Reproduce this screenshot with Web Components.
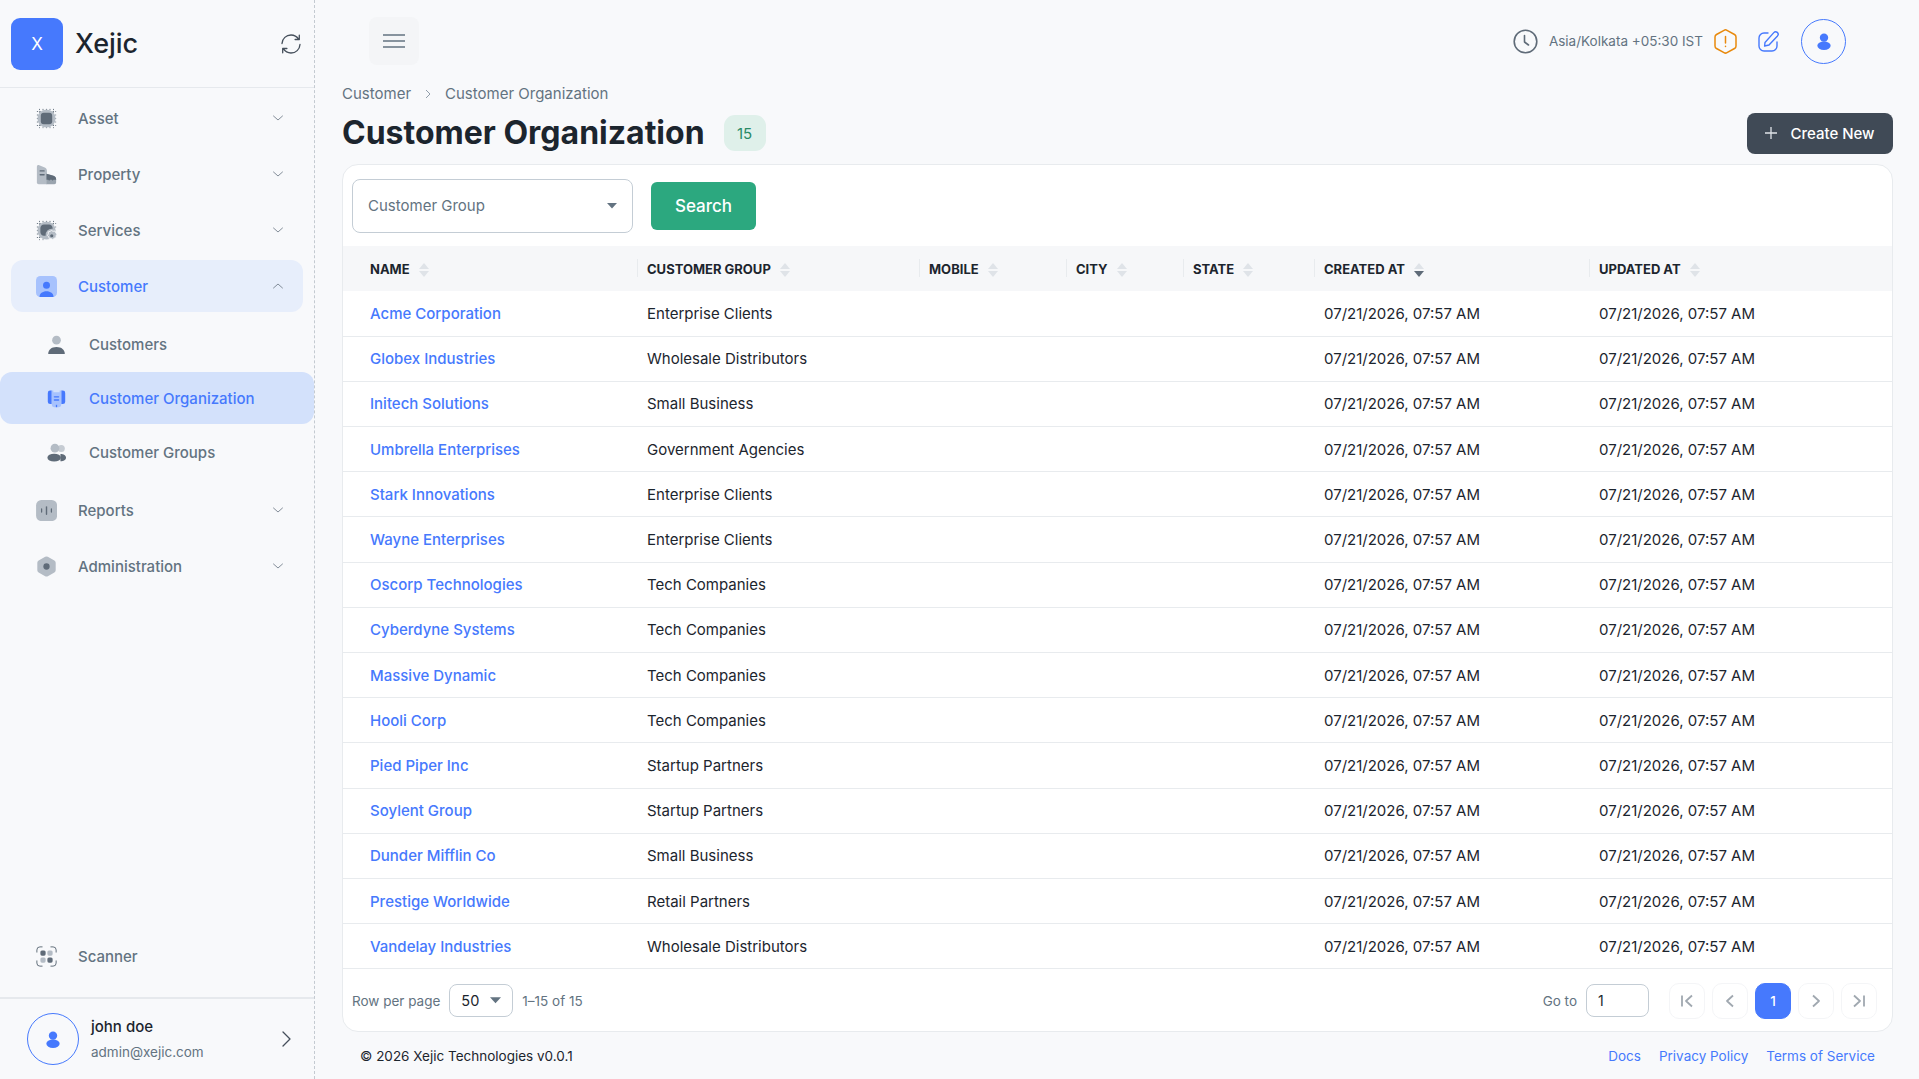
<!DOCTYPE html>
<html>
<head>
<meta charset="utf-8">
<title>Customer Organization</title>
<style>
html,body{margin:0;padding:0;height:100%;background:#f8f9fb}
body{font-family:Inter,"Noto Sans",sans-serif;color:#1c252e;overflow:hidden}
</style>
</head>
<body>
<app-shell>
  <side-bar slot="side"></side-bar>
  <top-bar></top-bar>
  <page-head></page-head>
  <org-card></org-card>
  <page-foot></page-foot>
</app-shell>

<script>
const ICONS={
  asset:`<svg viewBox="0 0 24 24" width="24" height="24"><g stroke="#5f6b78" stroke-width="1" stroke-dasharray="1.4 1.6"><path d="M5 1v22M9 1v22M13 1v22M17 1v22M21 1v22" transform="translate(-1 0)"/><path d="M1 5h22M1 9h22M1 13h22M1 17h22M1 21h22" transform="translate(0 -1)"/></g><circle cx="12" cy="12" r="10.4" fill="#b4bcc5"/><rect x="5.5" y="5.5" width="13" height="13" rx="3.4" fill="#5f6b78"/></svg>`,
  property:`<svg viewBox="0 0 24 24" width="24" height="24"><path d="M1 3c0-1.500 1.300-2.300 2.700-1.700L10 4c1.500.7 2.500 2 2.500 3.700V23H3a2 2 0 0 1-2-2z" fill="#b4bcc5"/><path d="M12 11l7 2.200c2.300.7 4 2 4 4V21a2 2 0 0 1-2 2h-9z" fill="#9aa4ae"/><path d="M12 11l7 2.200c2.300.7 4 2 4 4v.8h-3l-1 1-1-1h-2l-1 1-1-1h-2z" fill="#5f6b78"/><rect x="4" y="7" width="6" height="1.700" rx=".8" fill="#5f6b78"/><rect x="4" y="11.500" width="6" height="1.700" rx=".8" fill="#5f6b78"/></svg>`,
  services:`<svg viewBox="0 0 24 24" width="24" height="24"><g stroke="#5f6b78" stroke-width="1" stroke-dasharray="1.4 1.6"><path d="M4 1v22M8 1v22M12 1v8M16 1v8M20 1v4"/><path d="M1 4h22M1 8h22M1 12h8M1 16h8M1 20h4"/></g><circle cx="12" cy="12" r="10.4" fill="#b4bcc5"/><path d="M9 5h6c2 0 4 2 4 4v1a7 7 0 0 0-8 8H9c-2 0-4-2-4-4V9c0-2 2-4 4-4z" fill="#5f6b78"/><path d="M17.500 12l2 .9 2.200-.3.8 2 1.500 1.600-1.100 1.800.1 2.200-2.100.6-1.600 1.500-1.900-1-2.200.1-.6-2.100-1.500-1.600 1-1.900-.1-2.200 2.100-.6z" fill="#b4bcc5" stroke="#f8f9fb" stroke-width="1"/><circle cx="18" cy="18" r="1.800" fill="#5f6b78"/></svg>`,
  customer:`<svg viewBox="0 0 24 24" width="24" height="24"><rect width="24" height="24" rx="5" fill="#a7c2fd"/><circle cx="12" cy="10.500" r="4" fill="#4679fd"/><path d="M4 24c0-4 3.500-6.500 8-6.500s8 2.500 8 6.500z" fill="#4679fd"/></svg>`,
  person:`<svg viewBox="0 0 24 24" width="24" height="24"><circle cx="12" cy="6.500" r="5.500" fill="#b4bcc5"/><path d="M1.500 24c0-5.500 4-9 10.500-9s10.500 3.500 10.500 9z" fill="#5f6b78"/></svg>`,
  org:`<svg viewBox="0 0 24 24" width="24" height="24"><path d="M1 5a3 3 0 0 1 3-3h2v17H4a3 3 0 0 1-3-3zM18 2h2a3 3 0 0 1 3 3v11a3 3 0 0 1-3 3h-2z" fill="#4679fd"/><path d="M6 2h2v2h8V2h2v18a3 3 0 0 1-3 3H9a3 3 0 0 1-3-3z" fill="#a7c2fd"/><rect x="8.500" y="9" width="7" height="1.800" rx=".9" fill="#4679fd"/><rect x="8.500" y="13" width="7" height="1.800" rx=".9" fill="#4679fd"/><rect x="11.200" y="20" width="1.600" height="3" fill="#4679fd"/></svg>`,
  groups:`<svg viewBox="0 0 24 24" width="24" height="24"><circle cx="18" cy="7" r="4.500" fill="#c6ccd3"/><path d="M17 14c4 0 7 2 7 4.500S21 23 17 23z" fill="#5f6b78"/><circle cx="10" cy="6.500" r="5.500" fill="#b4bcc5"/><ellipse cx="9" cy="18.500" rx="8.500" ry="5" fill="#5f6b78"/></svg>`,
  reports:`<svg viewBox="0 0 24 24" width="24" height="24"><rect x="1" y="1" width="22" height="22" rx="5.500" fill="#b4bcc5" transform="translate(-1 -1) scale(1.090)"/><rect x="5.700" y="9.500" width="1.400" height="5" rx=".7" fill="#5f6b78"/><rect x="11.200" y="7" width="1.600" height="10" rx=".8" fill="#5f6b78"/><rect x="16.900" y="9.500" width="1.400" height="5" rx=".7" fill="#5f6b78"/></svg>`,
  admin:`<svg viewBox="0 0 24 24" width="24" height="24"><path d="M10.500.9a3 3 0 0 1 3 0l7.500 4.300a3 3 0 0 1 1.500 2.600v8.400a3 3 0 0 1-1.500 2.600l-7.500 4.300a3 3 0 0 1-3 0L3 18.800a3 3 0 0 1-1.500-2.600V7.800A3 3 0 0 1 3 5.200z" fill="#b4bcc5"/><circle cx="12" cy="12" r="3.600" fill="#5f6b78"/></svg>`,
  scanner:`<svg viewBox="0 0 24 24" width="24" height="24"><g fill="none" stroke="#5f6b78" stroke-width="1.100" stroke-linecap="round"><path d="M1 7V4.500A3.500 3.500 0 0 1 4.500 1H7M17 1h2.500A3.500 3.500 0 0 1 23 4.500V7M23 17v2.500a3.500 3.500 0 0 1-3.500 3.500H17M7 23H4.500A3.500 3.500 0 0 1 1 19.500V17"/></g><rect x="5" y="5" width="6" height="6" rx="1.800" fill="#5f6b78"/><rect x="13" y="5" width="6" height="6" rx="1.800" fill="#b4bcc5"/><rect x="5" y="13" width="6" height="6" rx="1.800" fill="#b4bcc5"/><rect x="13" y="13" width="6" height="6" rx="1.800" fill="#5f6b78"/></svg>`,
  down:`<svg viewBox="0 0 12 12" width="12" height="12" fill="none" stroke="#76818d" stroke-width=".9" stroke-linecap="round" stroke-linejoin="round"><path d="M1.500 4l4.500 4 4.500-4"/></svg>`,
  up:`<svg viewBox="0 0 12 12" width="12" height="12" fill="none" stroke="#76818d" stroke-width=".9" stroke-linecap="round" stroke-linejoin="round"><path d="M1.500 8l4.500-4 4.500 4"/></svg>`,
  user:`<svg viewBox="0 0 20 24" width="14" height="17"><circle cx="10" cy="6.500" r="6" fill="#4679fd"/><ellipse cx="10" cy="18" rx="9.500" ry="6" fill="#4679fd"/></svg>`
}

class BaseView extends HTMLElement{
  constructor(){
    super()
    this.attachShadow({mode:'open'})
  }
  get css(){return ''}
  get html(){return ''}
  connectedCallback(){
    this.shadowRoot.innerHTML=`<style>${this.css}</style>${this.html}`
  }
}

class AppShell extends BaseView{
  get css(){return `
    :host{display:grid;grid-template-columns:315px 1fr;height:1079px}
    .side{grid-column:1;height:1079px}
    .main{display:flex;flex-direction:column;min-width:0;padding:0 26px 0 27px}
  `}
  get html(){return `<div class="side"><slot name="side"></slot></div><div class="main"><slot></slot></div>`}
}

class NavItem extends BaseView{
  get css(){return `
    :host{display:block}
    .row{display:flex;align-items:center;height:52px;box-sizing:border-box;margin:0 11px;padding:0 19px 0 25px;border-radius:12px;color:#637381;font-size:15px;font-weight:500}
    :host([open]) .row{background:#e7eefb;color:#4679fd}
    :host([sub]) .row{margin:0;padding-left:46px;border-radius:0 12px 12px 0}
    :host([current]) .row{background:#d3e1fb;color:#4679fd;border-radius:12px}
    .ic{width:21px;height:21px;flex:none;margin-right:21px;display:flex}
    .ic svg{width:100%;height:100%}
    :host([sub]) .ic{width:19px;height:19px;margin:0 23px 0 1px}
    .t{flex:1;white-space:nowrap}
    .c{display:flex}
  `}
  get html(){
    let arrow=this.getAttribute('arrow')
    return `<div class="row"><span class="ic">${ICONS[this.getAttribute('icon')]}</span><span class="t"><slot></slot></span>${arrow?`<span class="c">${ICONS[arrow]}</span>`:''}</div>`
  }
}

class SideBar extends BaseView{
  get css(){return `
    :host{display:flex;flex-direction:column;height:1079px;box-sizing:border-box;border-right:1px dashed #c4cad1;background:#f8f9fb}
    header{display:flex;align-items:center;height:88px;box-sizing:border-box;padding:0 11px;border-bottom:1px solid #e6e9ed;flex:none}
    .logo{width:52px;height:52px;border-radius:9px;background:#4679fd;color:#fff;display:flex;align-items:center;justify-content:center;font-size:17px;flex:none}
    .brand{font-size:27px;font-weight:500;margin-left:12px;flex:1;color:#1c252e}
    .sync{display:flex;margin-right:0}
    nav{flex:1;padding-top:4px;display:flex;flex-direction:column;gap:4px}
    .group{display:flex;flex-direction:column;gap:2px;margin:2px 0}
    .scan{padding-bottom:15px;flex:none}
    .me{display:flex;align-items:center;height:82px;box-sizing:border-box;border-top:2px solid #e6e9ed;padding:0 22px 0 27px;flex:none}
    .av{width:50px;height:50px;border:1px solid #4679fd;border-radius:50%;display:flex;align-items:center;justify-content:center;flex:none;margin-right:12px}
    .who{flex:1}
    .n{font-size:15px;line-height:20px;font-weight:500;color:#1c252e}
    .e{font-size:13.500px;line-height:20px;margin-top:5px;color:#637381}
    .go{display:flex}
  `}
  get html(){return `
    <header>
      <div class="logo">X</div>
      <div class="brand">Xejic</div>
      <span class="sync"><svg viewBox="0 0 24 24" width="24" height="24" fill="none" stroke="#454f5b" stroke-width="1.300" stroke-linecap="round" stroke-linejoin="round"><path d="M3 11.500C3.300 6.500 7.200 3 12 3c3.500 0 6 1.700 7.800 4.300M20.300 3.200v4.300h-4.200"/><path d="M21 12.500c-.3 5-4.200 8.500-9 8.500-3.500 0-6-1.700-7.800-4.300M3.700 20.800v-4.300h4.200"/></svg></span>
    </header>
    <nav>
      <nav-item icon="asset" arrow="down">Asset</nav-item>
      <nav-item icon="property" arrow="down">Property</nav-item>
      <nav-item icon="services" arrow="down">Services</nav-item>
      <nav-item icon="customer" arrow="up" open>Customer</nav-item>
      <div class="group">
        <nav-item icon="person" sub>Customers</nav-item>
        <nav-item icon="org" sub current>Customer Organization</nav-item>
        <nav-item icon="groups" sub>Customer Groups</nav-item>
      </div>
      <nav-item icon="reports" arrow="down">Reports</nav-item>
      <nav-item icon="admin" arrow="down">Administration</nav-item>
    </nav>
    <div class="scan"><nav-item icon="scanner">Scanner</nav-item></div>
    <div class="me">
      <div class="av">${ICONS.user}</div>
      <div class="who"><div class="n">john doe</div><div class="e">admin@xejic.com</div></div>
      <span class="go"><svg viewBox="0 0 12 20" width="12" height="20" fill="none" stroke="#454f5b" stroke-width="1.300" stroke-linecap="round" stroke-linejoin="round"><path d="M3 3l7 7-7 7"/></svg></span>
    </div>
  `}
}

class TopBar extends BaseView{
  get css(){return `
    :host{display:flex;align-items:center;height:48px;margin-top:17px;flex:none}
    .menu{width:50px;height:48px;margin-left:27px;border-radius:8px;background:#f4f5f7;display:flex;align-items:center;justify-content:center}
    .sp{flex:1}
    .tz{font-size:13.500px;color:#637381;margin:0 11px 0 11px;white-space:nowrap}
    svg{display:block}
    .edit{margin:0 21px}
    .av{width:45px;height:45px;box-sizing:border-box;border:1px solid #4679fd;border-radius:50%;display:flex;align-items:center;justify-content:center;margin-right:47px}
  `}
  get html(){return `
    <div class="menu"><svg viewBox="0 0 22 14" width="22" height="14" stroke="#637381" stroke-width="1.500"><path d="M0 1h22M0 7h22M0 13h22"/></svg></div>
    <div class="sp"></div>
    <svg viewBox="0 0 25 25" width="25" height="25" fill="none" stroke="#5f6b78" stroke-width="1.600" stroke-linecap="round" stroke-linejoin="round"><circle cx="12.500" cy="12.500" r="11.300"/><path d="M11.500 6.500v6.500l4 3"/></svg>
    <span class="tz">Asia/Kolkata +05:30 IST</span>
    <svg viewBox="0 0 23 25" width="23" height="25" fill="none" stroke="#e8890c" stroke-width="1.500" stroke-linecap="round" stroke-linejoin="round"><path d="M10 1.300a3 3 0 0 1 3 0l7.500 4.200a3 3 0 0 1 1.500 2.600v8.800a3 3 0 0 1-1.500 2.600L13 23.700a3 3 0 0 1-3 0l-7.500-4.200A3 3 0 0 1 1 16.900V8.100a3 3 0 0 1 1.500-2.600z"/><path d="M11.500 7.500v6.500M11.500 17.300v.3"/></svg>
    <svg class="edit" viewBox="0 0 22 22" width="22" height="22" fill="none" stroke="#4679fd" stroke-width="1.400" stroke-linecap="round" stroke-linejoin="round"><path d="M10 3H6a5 5 0 0 0-5 5v8a5 5 0 0 0 5 5h8a5 5 0 0 0 5-5v-4"/><path d="M7 12.500L15.800 2.600a2.500 2.500 0 0 1 3.500-.2 2.500 2.500 0 0 1 .2 3.500L11 15l-4.400 1z"/></svg>
    <div class="av">${ICONS.user}</div>
  `}
}

class PageHead extends BaseView{
  get css(){return `
    :host{display:block;flex:none;margin-top:19px}
    .crumb{display:flex;align-items:center;font-size:15px;line-height:20px;color:#637381;white-space:nowrap}
    .crumb svg{margin:0 12px}
    .row{display:flex;align-items:center;height:42px;margin-top:8px}
    h1{margin:0;font-size:32px;font-weight:700;color:#1c252e;white-space:nowrap;line-height:42px}
    .badge{margin-left:19px;width:42px;height:36px;border-radius:11px;background:#dff0ea;color:#2a8a66;font-size:15px;display:flex;align-items:center;justify-content:center}
    .sp{flex:1}
    .add{display:flex;align-items:center;justify-content:center;width:146px;height:41px;border-radius:8px;background:#404a56;color:#fff;font-size:15px;font-weight:500;gap:13px}
  `}
  get html(){return `
    <div class="crumb"><span>Customer</span><svg viewBox="0 0 10 10" width="10" height="10" fill="none" stroke="#919eab" stroke-width="1"><path d="M3 1l4 4-4 4"/></svg><span>Customer Organization</span></div>
    <div class="row"><h1>Customer Organization</h1><span class="badge">15</span><span class="sp"></span>
      <div class="add"><svg viewBox="0 0 12 12" width="12" height="12" stroke="#dfe3e8" stroke-width="1.300"><path d="M6 0v12M0 6h12"/></svg><span>Create New</span></div>
    </div>
  `}
}

const ROWS=[
  ['Acme Corporation','Enterprise Clients'],
  ['Globex Industries','Wholesale Distributors'],
  ['Initech Solutions','Small Business'],
  ['Umbrella Enterprises','Government Agencies'],
  ['Stark Innovations','Enterprise Clients'],
  ['Wayne Enterprises','Enterprise Clients'],
  ['Oscorp Technologies','Tech Companies'],
  ['Cyberdyne Systems','Tech Companies'],
  ['Massive Dynamic','Tech Companies'],
  ['Hooli Corp','Tech Companies'],
  ['Pied Piper Inc','Startup Partners'],
  ['Soylent Group','Startup Partners'],
  ['Dunder Mifflin Co','Small Business'],
  ['Prestige Worldwide','Retail Partners'],
  ['Vandelay Industries','Wholesale Distributors']
]
const STAMP='07/21/2026, 07:57 AM'

class OrgCard extends BaseView{
  get css(){return `
    :host{display:block;flex:none;margin-top:10px;height:868px;box-sizing:border-box;background:#fff;border:1px solid #e8ebee;border-radius:16px;overflow:hidden}
    .filters{display:flex;align-items:center;height:81px;box-sizing:border-box;padding:0 0 0 9px}
    .sel{width:281px;height:54px;box-sizing:border-box;border:1px solid #c4cdd5;border-radius:8px;display:flex;align-items:center;padding:0 15px;font-size:15px;color:#637381}
    .sel span{flex:1}
    .search{margin-left:18px;width:105px;height:48px;border-radius:6px;background:#2ca87f;color:#fff;font-size:17px;font-weight:500;display:flex;align-items:center;justify-content:center}
    table{width:100%;table-layout:fixed;border-collapse:collapse}
    th{height:45px;padding:0 0 0 10px;background:#f6f7f9;font-size:13px;font-weight:700;text-align:left;color:#1c252e;white-space:nowrap;position:relative}
    th:first-child{padding-left:27px}
    th+th::before{content:'';position:absolute;left:0;top:13px;height:18px;width:1px;background:#e8ebee}
    th i{display:inline-block;vertical-align:-3px;margin-left:9px}
    td{height:45.200px;box-sizing:border-box;padding:0 0 0 10px;font-size:15px;color:#1c252e;border-bottom:1px solid #e8ebee;white-space:nowrap}
    td:first-child{padding-left:27px;color:#4679fd;font-weight:500}
  `}
  sortIcon(active){
    return `<i><svg viewBox="0 0 10 14" width="10" height="14" style="display:block"><path d="M5 0l5 6H0z" fill="#dfe3e8"/><path d="M5 14l5-6H0z" fill="${active?'#5f6b78':'#dfe3e8'}"/></svg></i>`
  }
  get html(){
    let cols=[294,282,147,117,131,275,303]
    let heads=['NAME','CUSTOMER GROUP','MOBILE','CITY','STATE','CREATED AT','UPDATED AT']
    return `
    <div class="filters">
      <div class="sel"><span>Customer Group</span><svg viewBox="0 0 10 6" width="10" height="6"><path d="M0 0h10L5 5.500z" fill="#637381"/></svg></div>
      <div class="search">Search</div>
    </div>
    <table>
      <colgroup>${cols.map(w=>`<col style="width:${w}px">`).join('')}</colgroup>
      <thead><tr>${heads.map((h,i)=>`<th>${h}${this.sortIcon(i==5)}</th>`).join('')}</tr></thead>
      <tbody>${ROWS.map(r=>`<tr><td>${r[0]}</td><td>${r[1]}</td><td></td><td></td><td></td><td>${STAMP}</td><td>${STAMP}</td></tr>`).join('')}</tbody>
    </table>
    <data-pager></data-pager>
  `}
}

class DataPager extends BaseView{
  get css(){return `
    :host{display:flex;align-items:center;height:63px;padding:0 15px 0 9px;font-size:13.500px;color:#637381;white-space:nowrap}
    .box{box-sizing:border-box;height:33px;border:1px solid #c4cdd5;border-radius:8px;display:flex;align-items:center;background:#fff;color:#1c252e}
    .size{width:64px;margin:0 9px;padding:0 11px;font-size:14.500px;justify-content:space-between}
    .sp{flex:1}
    .goto{width:63px;margin:0 13px 0 9px;padding:0 11px;font-size:14px}
    .p{box-sizing:border-box;width:36px;height:36px;border:1px solid #f4f5f7;border-radius:10px;display:flex;align-items:center;justify-content:center;margin-left:7px}
    .p.on{background:#4679fd;border-color:#4679fd;color:#fff;font-weight:500}
    svg{display:block}
  `}
  btn(d){
    return `<div class="p"><svg viewBox="0 0 14 14" width="14" height="14" fill="none" stroke="#a0a8b0" stroke-width="1.800" stroke-linejoin="round"><path d="${d}"/></svg></div>`
  }
  get html(){return `
    <span>Row per page</span>
    <div class="box size"><span>50</span><svg viewBox="0 0 12 7" width="11" height="7"><path d="M0 0h12L6 6.500z" fill="#637381"/></svg></div>
    <span>1–15 of 15</span>
    <span class="sp"></span>
    <span>Go to</span>
    <div class="box goto">1</div>
    ${this.btn('M2 1.500v11M12 1.500L6 7l6 5.500')}
    ${this.btn('M10 1.500L4 7l6 5.500')}
    <div class="p on">1</div>
    ${this.btn('M4 1.500L10 7l-6 5.500')}
    ${this.btn('M2 1.500L8 7l-6 5.500M12 1.500v11')}
  `}
}

class PageFoot extends BaseView{
  get css(){return `
    :host{display:flex;flex:1;align-items:center;justify-content:space-between;padding:0 18px;font-size:13.500px;color:#1c252e;white-space:nowrap;height:47px}
    .links{display:flex;gap:18px;color:#4679fd}
  `}
  get html(){return `<span>© 2026 Xejic Technologies v0.0.1</span><div class="links"><span>Docs</span><span>Privacy Policy</span><span>Terms of Service</span></div>`}
}

customElements.define('nav-item',NavItem)
customElements.define('side-bar',SideBar)
customElements.define('top-bar',TopBar)
customElements.define('page-head',PageHead)
customElements.define('data-pager',DataPager)
customElements.define('org-card',OrgCard)
customElements.define('page-foot',PageFoot)
customElements.define('app-shell',AppShell)
</script>
</body>
</html>
